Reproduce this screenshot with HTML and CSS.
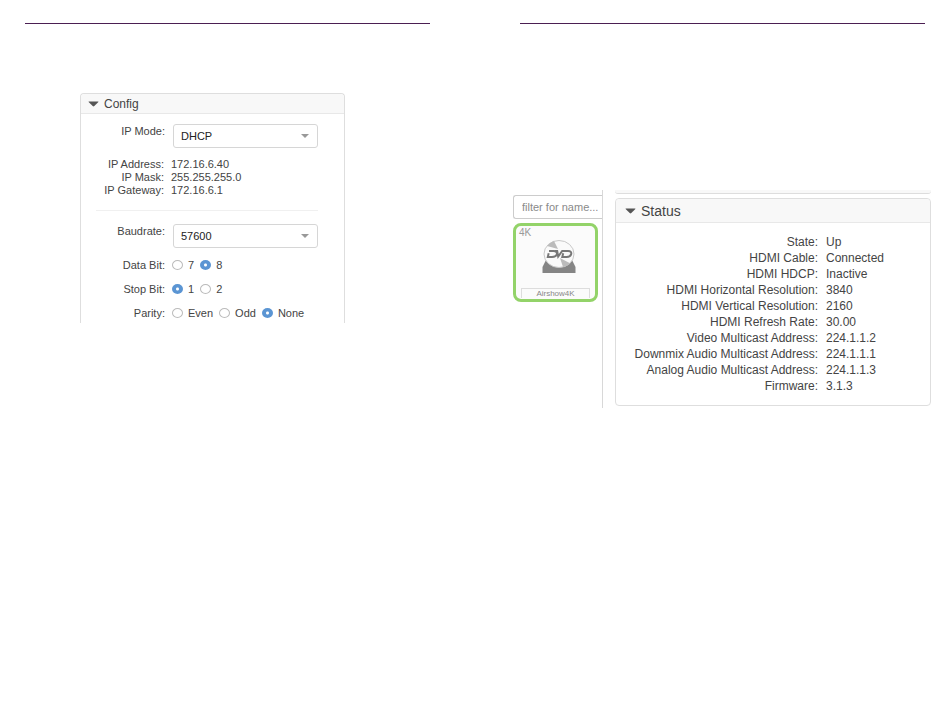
FILE: index.html
```html
<!DOCTYPE html>
<html lang="en">
<head>
  <meta charset="UTF-8">
  <meta name="viewport" content="width=device-width, initial-scale=1.0">
  <title>Config and Status</title>
  <link rel="stylesheet" href="styles.css">
</head>
<body>
  <main class="spread">
    <section class="sheet">
      <hr class="rule">
      <div class="panel config">
        <h2 class="panel-title">
          <svg class="caret" viewBox="0 0 11 6" aria-hidden="true"><path d="M1 0.5h9q0.8 0 0.4 0.6L6.3 5.1q-0.8 0.6-1.6 0L0.6 1.1Q0.2 0.5 1 0.5z"/></svg>
          Config
        </h2>
        <form class="config-form">
          <div class="field">
            <label class="name" for="ip-mode">IP Mode:</label>
            <select id="ip-mode">
              <option>DHCP</option>
            </select>
          </div>
          <dl class="info">
            <dt>IP Address:</dt><dd>172.16.6.40</dd>
            <dt>IP Mask:</dt><dd>255.255.255.0</dd>
            <dt>IP Gateway:</dt><dd>172.16.6.1</dd>
          </dl>
          <hr class="divider">
          <div class="field">
            <label class="name" for="baudrate">Baudrate:</label>
            <select id="baudrate">
              <option>57600</option>
            </select>
          </div>
          <div class="field radios" role="radiogroup" aria-labelledby="data-bit">
            <span class="name" id="data-bit">Data Bit:</span>
            <div class="options">
              <label><input type="radio" name="data-bit">7</label>
              <label><input type="radio" name="data-bit" checked>8</label>
            </div>
          </div>
          <div class="field radios" role="radiogroup" aria-labelledby="stop-bit">
            <span class="name" id="stop-bit">Stop Bit:</span>
            <div class="options">
              <label><input type="radio" name="stop-bit" checked>1</label>
              <label><input type="radio" name="stop-bit">2</label>
            </div>
          </div>
          <div class="field radios" role="radiogroup" aria-labelledby="parity">
            <span class="name" id="parity">Parity:</span>
            <div class="options">
              <label><input type="radio" name="parity">Even</label>
              <label><input type="radio" name="parity">Odd</label>
              <label><input type="radio" name="parity" checked>None</label>
            </div>
          </div>
        </form>
      </div>
    </section>

    <section class="sheet">
      <hr class="rule">
      <div class="device">
        <aside class="sidebar">
          <input class="filter" type="text" placeholder="filter for name..." aria-label="filter for name">
          <button class="tile" type="button">
            <span class="badge">4K</span>
            <svg class="dvd" viewBox="0 0 34 34" aria-hidden="true">
              <path class="tray" d="M5 19h24l4.5 9v6H.5v-6z"/>
              <ellipse class="disc" cx="17" cy="15" rx="15" ry="13.5"/>
              <path class="shine" d="M5 7A15 13.5 0 0 1 12 2L16 10zM18 19l10.5 5.5A15 13.5 0 0 1 21 28z"/>
              <path class="logo" d="M7 12h4.5c5.5 0 4 6-1.5 6H5.8l.9-3.8M12.8 12h2.4l1 5.5 4-5.5h6c5 0 3.5 6-1.5 6h-4.4l.9-3.8"/>
            </svg>
            <span class="tile-name">Airshow4K</span>
          </button>
        </aside>
        <div class="details">
          <div class="previous"></div>
          <div class="panel status">
            <h2 class="panel-title">
              <svg class="caret" viewBox="0 0 11 6" aria-hidden="true"><path d="M1 0.5h9q0.8 0 0.4 0.6L6.3 5.1q-0.8 0.6-1.6 0L0.6 1.1Q0.2 0.5 1 0.5z"/></svg>
              Status
            </h2>
            <dl class="info">
              <dt>State:</dt><dd>Up</dd>
              <dt>HDMI Cable:</dt><dd>Connected</dd>
              <dt>HDMI HDCP:</dt><dd>Inactive</dd>
              <dt>HDMI Horizontal Resolution:</dt><dd>3840</dd>
              <dt>HDMI Vertical Resolution:</dt><dd>2160</dd>
              <dt>HDMI Refresh Rate:</dt><dd>30.00</dd>
              <dt>Video Multicast Address:</dt><dd>224.1.1.2</dd>
              <dt>Downmix Audio Multicast Address:</dt><dd>224.1.1.1</dd>
              <dt>Analog Audio Multicast Address:</dt><dd>224.1.1.3</dd>
              <dt>Firmware:</dt><dd>3.1.3</dd>
            </dl>
          </div>
        </div>
      </div>
    </section>
  </main>
</body>
</html>
```
FILE: styles.css
```css
* {
  box-sizing: border-box;
}
body {
  margin: 0;
  background: #fff;
  color: #444;
  font-family: "Liberation Sans", Arial, sans-serif;
  font-size: 11px;
}
.spread {
  display: grid;
  grid-template-columns: 1fr 1fr;
}
.sheet {
  padding-top: 23px;
}
.rule {
  margin: 0 45px 0 25px;
  border: 0;
  border-top: 1px solid #4b1f52;
}
.sheet + .sheet .rule {
  margin: 0 25px 0 45px;
}

/* panels */
.panel {
  border: 1px solid #dedede;
  border-radius: 4px;
}
.panel-title {
  display: flex;
  align-items: center;
  gap: 5px;
  margin: 0;
  height: 20px;
  padding-left: 7px;
  background: #f8f8f8;
  border-bottom: 1px solid #e8e8e8;
  border-radius: 4px 4px 0 0;
  font-size: 12px;
  font-weight: normal;
}
.caret {
  width: 11px;
  height: 6px;
  fill: #555;
}
.info {
  display: grid;
  margin: 0;
}
.info dt {
  text-align: right;
}
.info dd {
  margin: 0;
}

/* config */
.config {
  margin: 69px 130px 0 80px;
  border-bottom: 0;
  border-radius: 4px 4px 0 0;
}
.config-form {
  padding: 10px 26px 3px 15px;
}
.field {
  display: grid;
  grid-template-columns: 69px 1fr;
  column-gap: 8px;
}
.name {
  line-height: 14px;
  text-align: right;
}
select {
  appearance: none;
  width: 100%;
  height: 24px;
  padding: 0 7px;
  border: 1px solid #d6d6d6;
  border-radius: 3px;
  background: #fff url("data:image/svg+xml,%3Csvg xmlns='http://www.w3.org/2000/svg' viewBox='0 0 8 4'%3E%3Cpath d='M0 0h8L4 4z' fill='%23999'/%3E%3C/svg%3E") no-repeat right 8px center / 8px 4px;
  color: #222;
  font: inherit;
}
.config .info {
  grid-template-columns: 68px 1fr;
  column-gap: 7px;
  padding: 10px 0 13px;
  line-height: 13px;
}
.divider {
  margin: 0 0 13px;
  border: 0;
  border-top: 1px solid #f0f0f0;
}
.radios {
  column-gap: 7px;
  margin-top: 10px;
}
.options {
  display: flex;
  gap: 6px;
}
.options label {
  display: flex;
  align-items: center;
  gap: 5px;
}
.options input {
  appearance: none;
  width: 11px;
  height: 10px;
  margin: 0;
  border: 1px solid #bbb;
  border-radius: 50%;
  background: #fff;
}
.options input:checked {
  border-color: #5b95d3;
  background: radial-gradient(circle, #fff 1px, #5b95d3 2px);
}

/* device */
.device {
  display: flex;
  margin: 166px 19px 0 38px;
}
.sidebar {
  width: 90px;
  padding-top: 5px;
  border-right: 1px solid #d8d8d8;
}
.filter {
  display: block;
  width: 100%;
  height: 24px;
  padding: 0 0 0 8px;
  border: 1px solid #ccc;
  border-right: 0;
  border-radius: 3px 0 0 3px;
  color: #555;
  font: inherit;
}
.filter::placeholder {
  color: #8a8a8a;
}
.tile {
  display: flex;
  flex-direction: column;
  width: 85px;
  height: 79px;
  margin-top: 4px;
  padding: 1px 3px 0;
  border: 3px solid #93d369;
  border-radius: 8px;
  background: #fbfbfb;
  color: #888;
  font: inherit;
}
.badge {
  font-size: 10px;
  line-height: 12px;
  color: #999;
  text-align: left;
}
.dvd {
  width: 34px;
  height: 34px;
  margin-left: 23px;
}
.tray {
  fill: #858585;
}
.disc {
  fill: #fafafa;
  stroke: #c8c8c8;
}
.shine {
  fill: #bbb;
}
.logo {
  fill: none;
  stroke: #777;
  stroke-width: 2;
}
.tile-name {
  margin: 15px 2px 0;
  border: 1px solid #ddd;
  border-bottom: 0;
  font-size: 8px;
  line-height: 9px;
  text-align: center;
}
.details {
  flex: 1;
  padding: 0 0 2px 12px;
}
.previous {
  height: 4px;
  margin-bottom: 4px;
  border-bottom: 1px solid #ddd;
  border-radius: 0 0 3px 3px;
  background: #f8f8f8;
}
.status .panel-title {
  height: 24px;
  padding-left: 9px;
  font-size: 14px;
}
.status .info {
  grid-template-columns: 202px 1fr;
  column-gap: 8px;
  padding: 11px 0;
  font-size: 12px;
  line-height: 16px;
}
```
